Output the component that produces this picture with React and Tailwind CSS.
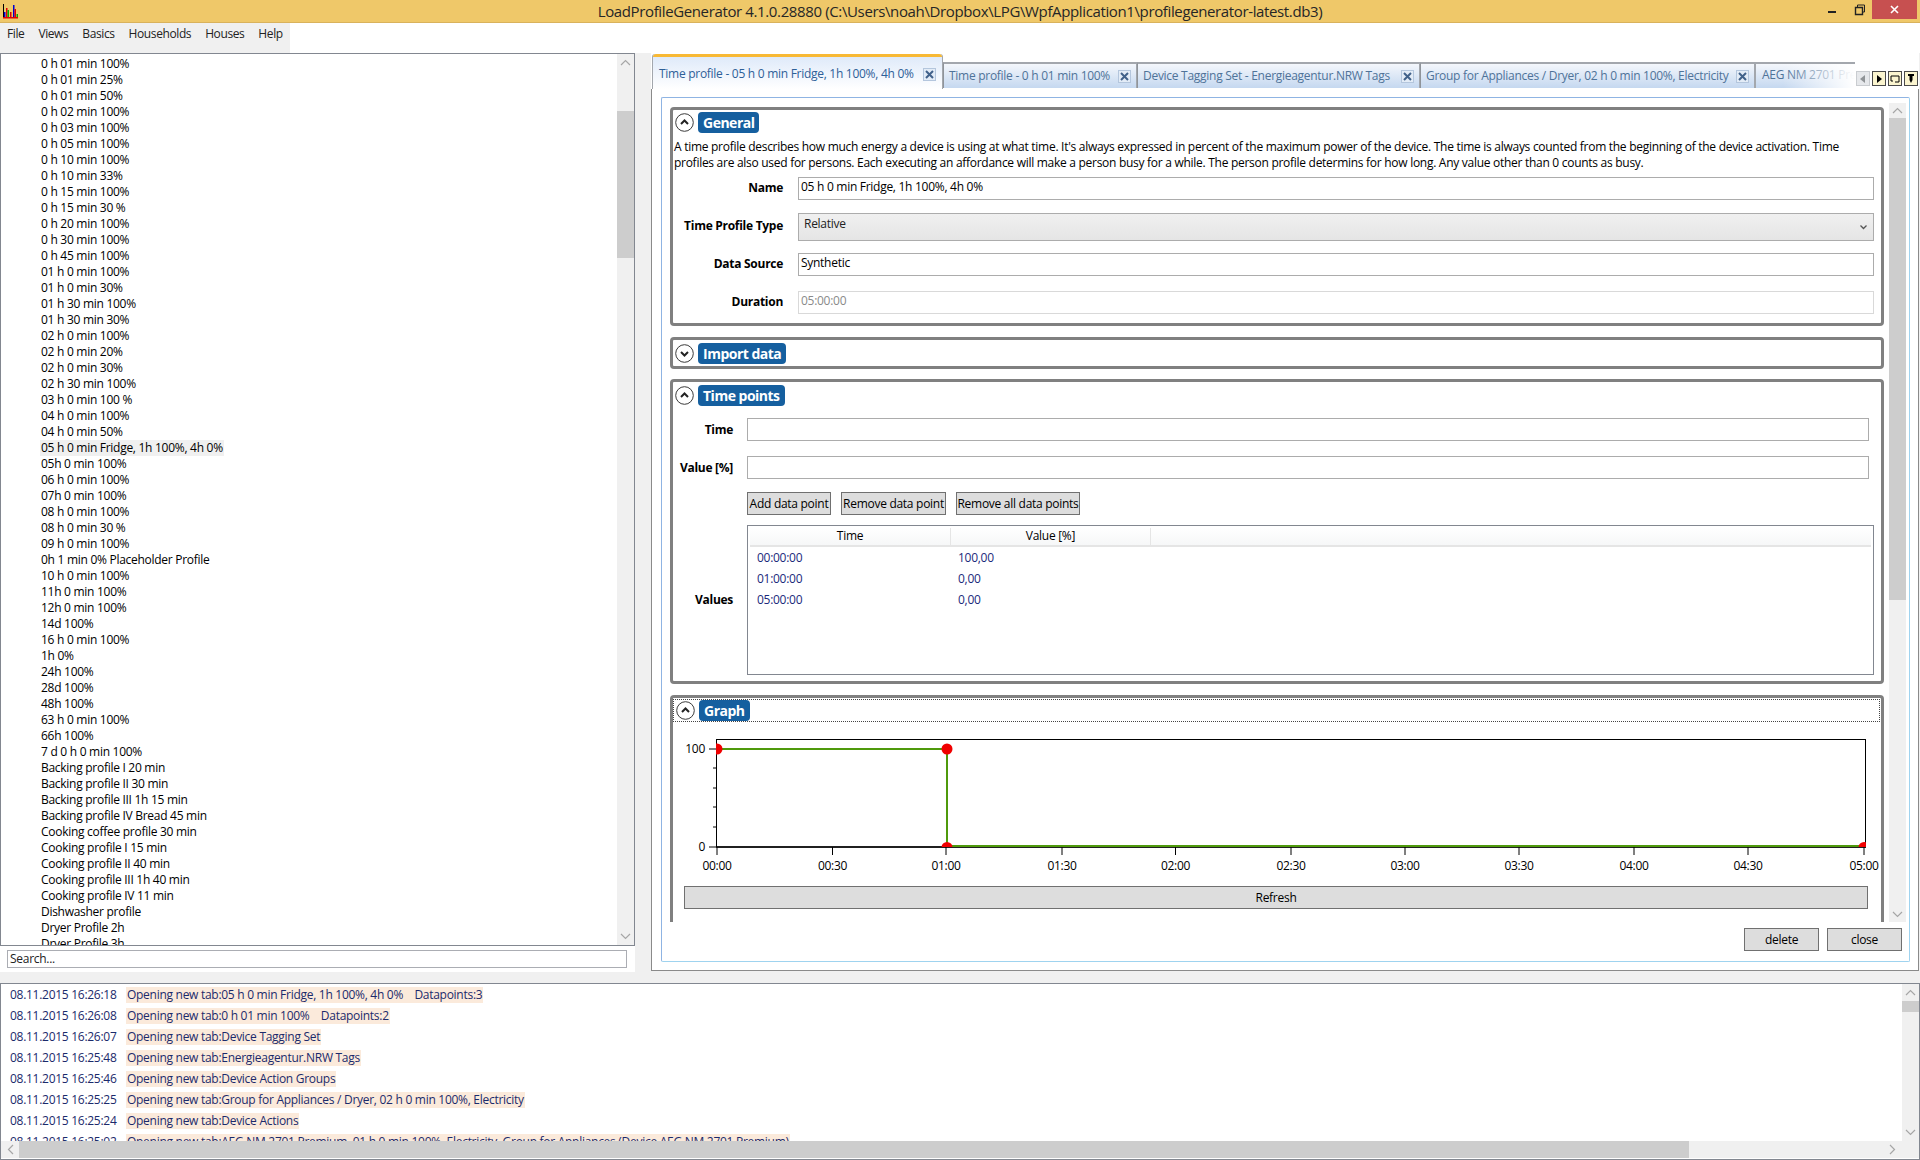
const listItems = [
  '0 h 01 min 100%', '0 h 01 min 25%', '0 h 01 min 50%', '0 h 02 min 100%', '0 h 03 min 100%', '0 h 05 min 100%',
  '0 h 10 min 100%', '0 h 10 min 33%', '0 h 15 min 100%', '0 h 15 min 30 %', '0 h 20 min 100%', '0 h 30 min 100%',
  '0 h 45 min 100%', '01 h 0 min 100%', '01 h 0 min 30%', '01 h 30 min 100%', '01 h 30 min 30%', '02 h 0 min 100%',
  '02 h 0 min 20%', '02 h 0 min 30%', '02 h 30 min 100%', '03 h 0 min 100 %', '04 h 0 min 100%', '04 h 0 min 50%',
  '05 h 0 min Fridge, 1h 100%, 4h 0%', '05h 0 min 100%', '06 h 0 min 100%', '07h 0 min 100%', '08 h 0 min 100%',
  '08 h 0 min 30 %', '09 h 0 min 100%', '0h 1 min 0% Placeholder Profile', '10 h 0 min 100%', '11h 0 min 100%',
  '12h 0 min 100%', '14d 100%', '16 h 0 min 100%', '1h 0%', '24h 100%', '28d 100%', '48h 100%', '63 h 0 min 100%',
  '66h 100%', '7 d 0 h 0 min 100%', 'Backing profile I 20 min', 'Backing profile II 30 min',
  'Backing profile III 1h 15 min', 'Backing profile IV Bread 45 min', 'Cooking coffee profile 30 min',
  'Cooking profile I 15 min', 'Cooking profile II 40 min', 'Cooking profile III 1h 40 min', 'Cooking profile IV 11 min',
  'Dishwasher profile', 'Dryer Profile 2h', 'Dryer Profile 3h',
];

const logRows = [
  ['08.11.2015 16:26:18', 'Opening new tab:05 h 0 min Fridge, 1h 100%, 4h 0%\u00a0\u00a0\u00a0\u00a0Datapoints:3'],
  ['08.11.2015 16:26:08', 'Opening new tab:0 h 01 min 100%\u00a0\u00a0\u00a0\u00a0Datapoints:2'],
  ['08.11.2015 16:26:07', 'Opening new tab:Device Tagging Set'],
  ['08.11.2015 16:25:48', 'Opening new tab:Energieagentur.NRW Tags'],
  ['08.11.2015 16:25:46', 'Opening new tab:Device Action Groups'],
  ['08.11.2015 16:25:25', 'Opening new tab:Group for Appliances / Dryer, 02 h 0 min 100%, Electricity'],
  ['08.11.2015 16:25:24', 'Opening new tab:Device Actions'],
  ['08.11.2015 16:25:02', 'Opening new tab:AEG NM 2701 Premium, 01 h 0 min 100%, Electricity, Group for Appliances (Device AEG NM 2701 Premium)'],
];

const xTicks = [
  [717, '00:00'], [832.5, '00:30'], [946, '01:00'], [1062, '01:30'], [1175.5, '02:00'],
  [1291, '02:30'], [1405, '03:00'], [1519, '03:30'], [1634, '04:00'], [1748, '04:30'], [1864, '05:00'],
];

const Logo = () => (
  <svg width="18" height="19" viewBox="0 0 18 19" className="mt-[2px] ml-[1px]">
    <rect x="2" y="2" width="1" height="13" fill="#000" />
    <rect x="3" y="10" width="1.5" height="5" fill="#0000d0" />
    <rect x="5" y="6" width="1.5" height="9" fill="#e00000" />
    <rect x="6.5" y="8" width="1.5" height="7" fill="#00b000" />
    <rect x="9" y="10" width="1.5" height="5" fill="#e00000" />
    <rect x="12" y="3" width="1.5" height="12" fill="#0000d0" />
    <rect x="13.5" y="7" width="1.5" height="8" fill="#e00000" />
    <rect x="15.5" y="12" width="1.5" height="3" fill="#00b000" />
    <rect x="2" y="15" width="15" height="1.5" fill="#e00000" />
  </svg>
);

const Chevron = ({ dir = 'up' }) => (
  <svg width="11" height="7" viewBox="0 0 11 7" fill="none" stroke="#a6a6a6" strokeWidth="1.2">
    {dir === 'up' && <path d="M1 6 L5.5 1.5 L10 6" />}
    {dir === 'down' && <path d="M1 1 L5.5 5.5 L10 1" />}
  </svg>
);

const VScroll = ({ spacer, thumb, btn = 'h-[17px]' }) => (
  <div className="flex w-[17px] shrink-0 flex-col bg-[#f0f0f0]">
    <div className={`flex ${btn} shrink-0 items-center justify-center`}><Chevron /></div>
    <div className={`${spacer} shrink-0`} />
    <div className={`${thumb} shrink-0 bg-[#cdcdcd]`} />
    <div className="flex-1" />
    <div className={`flex ${btn} shrink-0 items-center justify-center`}><Chevron dir="down" /></div>
  </div>
);

const Toggle = ({ open }) => (
  <svg width="19" height="19" viewBox="0 0 19 19" fill="none" className="shrink-0">
    <circle cx="9.5" cy="9.5" r="8.8" fill="#fff" stroke="#3a3a3a" strokeWidth="1" />
    <path d={open ? 'M6 11 L9.5 7.5 L13 11' : 'M6 8 L9.5 11.5 L13 8'} stroke="#222" strokeWidth="2" />
  </svg>
);

const SectionHead = ({ title, open }) => (
  <div className="flex h-[21px] items-center gap-[4px] pl-[2px]">
    <Toggle open={open} />
    <div className="flex h-[21px] items-center rounded-[4px] bg-[#155f9f] px-[5px] text-[14px] font-bold tracking-[-0.5px] text-white">
      {title}
    </div>
  </div>
);

const Field = ({ label, labelW, gap, right, children, className = '' }) => (
  <div className={`flex items-center ${className}`}>
    <div className={`${labelW} shrink-0 text-right font-bold`}>{label}</div>
    <div className={`${gap} shrink-0`} />
    <div className={`min-w-0 flex-1 ${right}`}>{children}</div>
  </div>
);

const TextBox = ({ value, muted }) => (
  <div className={`h-[23px] border pl-[2px] pt-[1px] ${muted ? 'border-[#d9d9d9] text-[#8a8a8a]' : 'border-[#acacac]'}`}>
    {value}
  </div>
);

const GrayButton = ({ children, className }) => (
  <div className={`flex h-[23px] items-center justify-center whitespace-nowrap border border-[#707070] bg-[#dddddd] ${className}`}>
    {children}
  </div>
);

const TabClose = () => (
  <div className="flex h-[13px] w-[13px] shrink-0 items-center justify-center border border-[#b4c6dd] bg-[#e3ecf7]">
    <svg width="9" height="9" viewBox="0 0 9 9" stroke="#41618a" strokeWidth="2"><path d="M1 1 L8 8 M8 1 L1 8" /></svg>
  </div>
);

const Tab = ({ text, width }) => (
  <div className={`mb-[1px] flex h-[26px] ${width} shrink-0 items-center justify-between border-x border-t-2 border-[#a3a7ad] border-l-[#8f949a] bg-gradient-to-b from-[#f4f7fc] to-[#c5d8f0] pl-[5px] pr-[5px] text-[#4f7399]`}>
    <span className="whitespace-nowrap">{text}</span>
    <TabClose />
  </div>
);

const NavButton = ({ children, off }) => (
  <div className={`flex h-[15px] w-[14px] items-center justify-center border ${off ? 'border-[#c9ccd0] bg-[#e6e8eb]' : 'border-[#4a4a4a] bg-[#fbf5cf]'}`}>
    {children}
  </div>
);

const Chart = () => (
  <svg width="1207" height="150" viewBox="673 730 1207 150" className="mt-[8px] block">
    <defs>
      <clipPath id="plot"><rect x="716" y="739" width="1150" height="108" /></clipPath>
    </defs>
    <rect x="716.5" y="739.5" width="1149" height="107.5" fill="#fff" stroke="#000" />
    <path d="M716 847 H1866" stroke="#000" strokeWidth="1.5" />
    {[749, 768, 788, 807, 827, 847].map((y) => (
      <path key={y} d={`M${y === 749 || y === 847 ? 709 : 713} ${y} H716`} stroke="#000" />
    ))}
    {xTicks.map(([x]) => <path key={x} d={`M${x} 847 V855`} stroke="#000" />)}
    <path d="M717 749 H947 V846 H1864" fill="none" stroke="#4f9a0c" strokeWidth="2" />
    <g clipPath="url(#plot)" fill="#f00000">
      <circle cx="717" cy="749" r="5.5" />
      <circle cx="947" cy="749" r="5.5" />
      <circle cx="947" cy="847.5" r="5.5" />
      <circle cx="1864" cy="847.5" r="5.5" />
    </g>
    <text x="705" y="753" textAnchor="end" fontSize="12" fill="#000">100</text>
    <text x="705" y="851" textAnchor="end" fontSize="12" fill="#000">0</text>
    {xTicks.map(([x, label]) => (
      <text key={label} x={x} y="870" textAnchor="middle" fontSize="12" fill="#000">{label}</text>
    ))}
  </svg>
);

const App = () => (
  <div className="flex h-[1160px] w-[1920px] flex-col overflow-hidden bg-white font-['Open_Sans',sans-serif] text-[12px] leading-[16px] tracking-[-0.28px] text-black">
    {/* title bar */}
    <div className="flex h-[23px] shrink-0 border-b border-[#d9b25c] bg-[#efc869]">
      <div className="w-[92px]"><Logo /></div>
      <div className="flex-1 text-center text-[15px] leading-[23px] tracking-[-0.37px] text-[#262626]">
        LoadProfileGenerator 4.1.0.28880 (C:\Users\noah\Dropbox\LPG\WpfApplication1\profilegenerator-latest.db3)
      </div>
      <div className="flex w-[92px] items-start">
        <div className="mt-[11px] h-[2px] w-[8px] bg-[#222]" />
        <svg width="12" height="12" viewBox="0 0 12 12" fill="none" stroke="#222" className="ml-[18px] mt-[4px]">
          <path d="M3.5 3 V1 H10.5 V8 H8.5" /><path d="M1.5 3.5 H8.5 V10.5 H1.5 Z" strokeWidth="1.4" />
        </svg>
        <div className="ml-[6px] flex h-[19px] w-[45px] items-center justify-center bg-[#c75050]">
          <svg width="9" height="9" viewBox="0 0 9 9" stroke="#fff" strokeWidth="1.6"><path d="M1 1 L8 8 M8 1 L1 8" /></svg>
        </div>
      </div>
    </div>

    {/* menu */}
    <div className="h-[30px] shrink-0">
      <div className="flex h-full w-[290px] gap-[14px] bg-[#f0f0f0] pl-[7px] pt-[3px] tracking-[-0.4px] text-[#222]">
        {['File', 'Views', 'Basics', 'Households', 'Houses', 'Help'].map((m) => <span key={m}>{m}</span>)}
      </div>
    </div>

    {/* main area */}
    <div className="flex h-[919px] shrink-0">
      <div className="flex w-[635px] shrink-0 flex-col bg-white">
        <div className="flex h-[893px] shrink-0 justify-between overflow-hidden border border-[#828790] border-r-[#828790]">
          <div className="overflow-hidden pl-[39px] pt-[2px]">
            {listItems.map((item, i) => (
              <div key={item + i} className="h-[16px] whitespace-nowrap">
                <span className={`inline-block px-[1px] ${i === 24 ? 'bg-[#f0f0f0]' : ''}`}>{item}</span>
              </div>
            ))}
          </div>
          <VScroll spacer="h-[40px]" thumb="h-[147px]" />
        </div>
        <div className="ml-[7px] mt-[4px] h-[18px] w-[620px] border border-[#abadb3] pl-[2px] text-[#222]">Search...</div>
      </div>

      <div className="flex min-w-0 flex-1 flex-col bg-[#f0f0f0] pl-[16px] pr-[1px]">
        {/* tab strip */}
        <div className="relative z-10 -mb-[1px] flex h-[36px] shrink-0 items-end bg-white pl-[1px]">
          <div className="flex h-[35px] w-[291px] shrink-0 flex-col rounded-t-[3px] border-x border-[#a3a7ad] border-b-0 bg-gradient-to-b from-[#dce8f9] to-white">
            <div className="h-[3px] shrink-0 rounded-t-[3px] bg-[#f8b935]" />
            <div className="flex items-center justify-between pl-[6px] pr-[6px] pt-[9px] text-[#2e6098]">
              <span className="whitespace-nowrap">Time profile - 05 h 0 min Fridge, 1h 100%, 4h 0%</span>
              <TabClose />
            </div>
          </div>
          <Tab width="w-[194px]" text="Time profile - 0 h 01 min 100%" />
          <Tab width="w-[283px]" text="Device Tagging Set - Energieagentur.NRW Tags" />
          <Tab width="w-[335px]" text="Group for Appliances / Dryer, 02 h 0 min 100%, Electricity" />
          <div className="relative mb-[1px] h-[26px] w-[100px] shrink-0 overflow-hidden border-l border-t-2 border-[#a3a7ad] bg-gradient-to-b from-[#f4f7fc] to-[#c5d8f0] pl-[6px] pt-[3px] text-[#4f7399]">
            <span className="whitespace-nowrap">AEG NM 2701 Premium, 01 h</span>
            <div className="absolute inset-y-0 right-0 w-[72px] bg-gradient-to-r from-transparent to-white" />
          </div>
          <div className="mb-[3px] ml-[1px] flex gap-[2px]">
            <NavButton off>
              <svg width="6" height="8" viewBox="0 0 6 8" fill="#8f9396"><path d="M5 0 V8 L0 4 Z" /></svg>
            </NavButton>
            <NavButton>
              <svg width="6" height="8" viewBox="0 0 6 8" fill="#000"><path d="M1 0 V8 L6 4 Z" /></svg>
            </NavButton>
            <NavButton>
              <svg width="10" height="10" viewBox="0 0 10 10" fill="none" stroke="#000"><path d="M1 2 H9 V8 H5 M1 2 V7 H3" /></svg>
            </NavButton>
            <NavButton>
              <svg width="8" height="9" viewBox="0 0 8 9" fill="#000"><path d="M1 0 H7 V2 H5.5 V6 L4 9 L2.5 6 V2 H1 Z" /></svg>
            </NavButton>
          </div>
        </div>

        {/* tab panel */}
        <div className="flex min-h-0 flex-1 flex-col bg-[#f0f0f0]">
          <div className="flex h-[883px] shrink-0 flex-col border border-[#8a8a8a] bg-white p-[8px] pl-[9px]">
            <div className="flex h-[865px] flex-col rounded-[2px] border border-[#8fb4e3] border-b-[#9fd3ef] border-r-[#9fd3ef] pt-[5px]">
              <div className="flex h-[819px] shrink-0">
                <div className="min-w-0 flex-1 overflow-hidden pl-[8px] pr-[5px] pt-[4px]">
                  {/* General */}
                  <section className="h-[219px] rounded-[4px] border-[3px] border-[#808080] pt-[2px]">
                    <SectionHead title="General" open />
                    <div className="mt-[6px] pl-[1px] pr-[30px]">
                      A time profile describes how much energy a device is using at what time. It's always expressed in percent of the maximum power of the device. The time is always counted from the beginning of the device activation. Time profiles are also used for persons. Each executing an affordance will make a person busy for a while. The person profile determins for how long. Any value other than 0 counts as busy.
                    </div>
                    <Field label="Name" labelW="w-[110px] pb-[2px]" gap="w-[15px]" right="mr-[7px]" className="mt-[6px]">
                      <TextBox value="05 h 0 min Fridge, 1h 100%, 4h 0%" />
                    </Field>
                    <Field label="Time Profile Type" labelW="w-[110px] pb-[2px]" gap="w-[15px]" right="mr-[7px]" className="mt-[13px]">
                      <div className="flex h-[28px] justify-between border border-[#acacac] bg-gradient-to-b from-[#f0f0f0] to-[#e5e5e5] pl-[5px] pr-[6px] pt-[2px]">
                        <span className="text-[#222]">Relative</span>
                        <svg width="7" height="5" viewBox="0 0 7 5" fill="none" stroke="#555" strokeWidth="1.3" className="mt-[9px]"><path d="M0.5 0.5 L3.5 3.5 L6.5 0.5" /></svg>
                      </div>
                    </Field>
                    <Field label="Data Source" labelW="w-[110px] pb-[2px]" gap="w-[15px]" right="mr-[7px]" className="mt-[12px]">
                      <TextBox value="Synthetic" />
                    </Field>
                    <Field label="Duration" labelW="w-[110px] pb-[2px]" gap="w-[15px]" right="mr-[7px]" className="mt-[15px]">
                      <TextBox value="05:00:00" muted />
                    </Field>
                  </section>

                  {/* Import data */}
                  <section className="mt-[11px] h-[32px] rounded-[4px] border-[3px] border-[#808080] pt-[3px]">
                    <SectionHead title="Import data" />
                  </section>

                  {/* Time points */}
                  <section className="mt-[10px] h-[305px] rounded-[4px] border-[3px] border-[#808080] pt-[3px]">
                    <SectionHead title="Time points" open />
                    <Field label="Time" labelW="w-[60px]" gap="w-[14px]" right="mr-[12px]" className="mt-[12px]">
                      <TextBox value="" />
                    </Field>
                    <Field label="Value [%]" labelW="w-[60px]" gap="w-[14px]" right="mr-[12px]" className="mt-[15px]">
                      <TextBox value="" />
                    </Field>
                    <div className="ml-[74px] mt-[13px] flex gap-[10px]">
                      <GrayButton className="w-[84px]">Add data point</GrayButton>
                      <GrayButton className="w-[105px]">Remove data point</GrayButton>
                      <GrayButton className="w-[124px]">Remove all data points</GrayButton>
                    </div>
                    <Field label="Values" labelW="w-[60px]" gap="w-[14px]" right="mr-[7px]" className="mt-[10px]">
                      <div className="h-[150px] border border-[#828790] p-[2px]">
                        <div className="flex h-[19px] border-b-2 border-[#e5e5e5] bg-gradient-to-b from-white to-[#f6f7f8]">
                          <div className="w-[201px] border-r border-[#e5e5e5] text-center">Time</div>
                          <div className="w-[200px] border-r border-[#e5e5e5] text-center">Value [%]</div>
                        </div>
                        {[['00:00:00', '100,00'], ['01:00:00', '0,00'], ['05:00:00', '0,00']].map(([t, v]) => (
                          <div key={t} className="flex h-[21px] items-center text-[#1b2a7b]">
                            <div className="w-[201px] pl-[7px]">{t}</div>
                            <div className="w-[200px] pl-[7px]">{v}</div>
                          </div>
                        ))}
                      </div>
                    </Field>
                  </section>

                  {/* Graph */}
                  <section className="mt-[11px] h-[240px] rounded-t-[4px] border-[3px] border-b-0 border-[#808080] pt-[1px]">
                    <div className="mr-[1px] h-[23px] border border-dotted border-[#444]">
                      <SectionHead title="Graph" open />
                    </div>
                    <Chart />
                    <GrayButton className="ml-[11px] mt-[6px] h-[22px] w-[1184px]">Refresh</GrayButton>
                  </section>
                </div>
                <VScroll spacer="h-0" thumb="h-[482px]" btn="h-[15px]" />
                <div className="w-[3px] shrink-0" />
              </div>
              <div className="mt-[6px] flex justify-end gap-[8px] pr-[7px]">
                <GrayButton className="w-[75px]">delete</GrayButton>
                <GrayButton className="w-[75px]">close</GrayButton>
              </div>
            </div>
          </div>
        </div>
      </div>
    </div>

    <div className="h-[11px] shrink-0 bg-[#f0f0f0]" />

    {/* log */}
    <div className="flex h-[177px] shrink-0 flex-col border border-[#828790]">
      <div className="flex h-[157px] shrink-0">
        <div className="min-w-0 flex-1 overflow-hidden pl-[9px] text-[#1b2a6b]">
          {logRows.map(([time, msg]) => (
            <div key={time} className="flex h-[21px] items-center whitespace-nowrap">
              <div className="w-[116px] shrink-0">{time}</div>
              <div className="bg-[#fbeadb] px-[1px]">{msg}</div>
            </div>
          ))}
        </div>
        <VScroll spacer="h-0" thumb="h-[11px]" />
      </div>
      <div className="flex h-[17px] shrink-0">
        <div className="flex w-[18px] shrink-0 items-center justify-center bg-[#f0f0f0]">
          <svg width="7" height="11" viewBox="0 0 7 11" fill="none" stroke="#a6a6a6" strokeWidth="1.2"><path d="M6 1 L1.5 5.5 L6 10" /></svg>
        </div>
        <div className="w-[1670px] shrink-0 bg-[#cdcdcd]" />
        <div className="flex flex-1 items-center justify-end bg-[#f0f0f0] pr-[6px]">
          <svg width="7" height="11" viewBox="0 0 7 11" fill="none" stroke="#a6a6a6" strokeWidth="1.2"><path d="M1 1 L5.5 5.5 L1 10" /></svg>
        </div>
        <div className="w-[17px] shrink-0 bg-[#f0f0f0]" />
      </div>
    </div>
  </div>
);

export default App;
